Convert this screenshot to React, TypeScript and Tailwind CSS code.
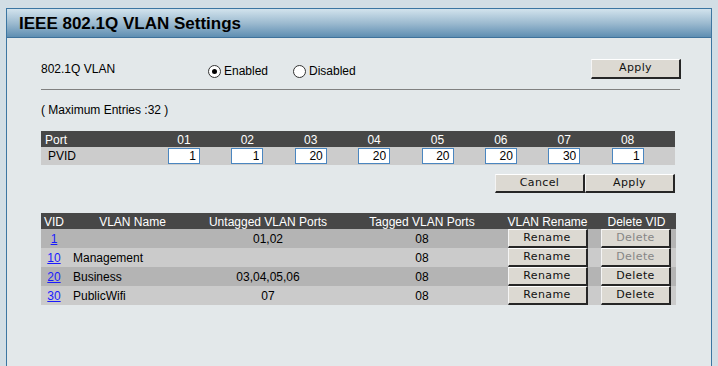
import { useState } from "react"

const ports = ["01", "02", "03", "04", "05", "06", "07", "08"]
const pvids = ["1", "1", "20", "20", "20", "20", "30", "1"]

const vlans = [
    { vid: "1", name: "", untagged: "01,02", tagged: "08", canDelete: false },
    { vid: "10", name: "Management", untagged: "", tagged: "08", canDelete: false },
    { vid: "20", name: "Business", untagged: "03,04,05,06", tagged: "08", canDelete: true },
    { vid: "30", name: "PublicWifi", untagged: "07", tagged: "08", canDelete: true },
]

function Btn({ label, className = "", disabled = false }: { label: string; className?: string; disabled?: boolean }) {
    return (
        <button
            className={`flex items-center justify-center bg-[#dcd9d2] border-t border-l border-t-white border-l-[#f4f4f4] border-b-2 border-r-2 border-b-[#262626] border-r-[#262626] font-['DejaVu_Sans',sans-serif] text-[11px] tracking-[0.4px] ${disabled ? "text-[#868686]" : "text-[#111]"} ${className}`}
        >
            {label}
        </button>
    )
}

function Radio({ checked, label, onClick }: { checked: boolean; label: string; onClick: () => void }) {
    return (
        <label className="flex items-center gap-[3px] cursor-pointer" onClick={onClick}>
            <span className="w-[13px] h-[13px] rounded-full border border-[#333] bg-white flex items-center justify-center">
                {checked && <span className="w-[5px] h-[5px] rounded-full bg-black" />}
            </span>
            <span className="text-[12px]">{label}</span>
        </label>
    )
}

export default function App() {
    const [enabled, setEnabled] = useState(true)

    return (
        <div className="w-full h-[366px] overflow-hidden bg-[#d2dee5] pt-2 px-[6px] font-['Liberation_Sans',Arial,sans-serif] text-black">
            <div className="border border-[#3c76a2] bg-[#e3e8ea] h-[400px]">
                {/* Title bar */}
                <div className="h-[29px] flex items-center pl-3 bg-gradient-to-b from-[#d2e3ed] via-[#9dbbd0] to-[#5e8eb2] border-b border-[#3f729b]">
                    <h1 className="text-[17px] font-bold leading-none">IEEE 802.1Q VLAN Settings</h1>
                </div>

                <div className="pl-[34px] pt-[21px]">
                    {/* enable row */}
                    <div className="flex items-center h-[20px] w-[640px]">
                        <span className="w-[167px] text-[12px]">802.1Q VLAN</span>
                        <div className="flex pt-[4px]">
                            <div className="w-[85px]">
                                <Radio checked={enabled} label="Enabled" onClick={() => setEnabled(true)} />
                            </div>
                            <Radio checked={!enabled} label="Disabled" onClick={() => setEnabled(false)} />
                        </div>
                        <Btn label="Apply" className="ml-auto w-[90px] h-[20px]" />
                    </div>

                    <div className="mt-[10px] w-[639px] border-t border-[#808080]" />

                    <p className="mt-[13px] text-[12px] leading-[14px]">( Maximum Entries :32 )</p>

                    {/* PVID table */}
                    <div className="mt-[14px] w-[634px] text-[12px]">
                        <div className="grid grid-cols-[127px_repeat(8,1fr)] h-[16px] items-center bg-[#474747] text-white">
                            <span className="pl-1">Port</span>
                            {ports.map(p => (
                                <span key={p} className="w-[32px] text-center">{p}</span>
                            ))}
                        </div>
                        <div className="grid grid-cols-[127px_repeat(8,1fr)] h-[18px] items-center bg-[#cccccc]">
                            <span className="pl-[7px]">PVID</span>
                            {pvids.map((v, i) => (
                                <input
                                    key={i}
                                    defaultValue={v}
                                    className="w-[32px] h-[16px] border border-[#4a86c0] bg-white text-right pr-[3px] text-[12px] outline-none"
                                />
                            ))}
                        </div>
                    </div>

                    <div className="mt-[9px] w-[634px] flex justify-end">
                        <Btn label="Cancel" className="w-[90px] h-[19px]" />
                        <Btn label="Apply" className="w-[90px] h-[19px]" />
                    </div>

                    {/* VLAN table */}
                    <div className="mt-[20px] w-[635px] text-[12px]">
                        <div className="grid grid-cols-[26px_131px_140px_168px_83px_87px] h-[16px] items-center bg-[#474747] text-white text-center">
                            <span>VID</span>
                            <span>VLAN Name</span>
                            <span>Untagged VLAN Ports</span>
                            <span>Tagged VLAN Ports</span>
                            <span>VLAN Rename</span>
                            <span className="pl-2">Delete VID</span>
                        </div>
                        {vlans.map((v, i) => (
                            <div
                                key={v.vid}
                                className={`grid grid-cols-[26px_131px_140px_168px_83px_87px] h-[19px] items-center ${i % 2 === 0 ? "bg-[#b4b4b4]" : "bg-[#cbcbcb]"}`}
                            >
                                <a href="#" className="text-center text-[#1a1aff] underline">{v.vid}</a>
                                <span className="pl-[6px]">{v.name}</span>
                                <span className="text-center">{v.untagged}</span>
                                <span className="text-center">{v.tagged}</span>
                                <div className="flex justify-center">
                                    <Btn label="Rename" className="w-[80px] h-[19px]" />
                                </div>
                                <div className="flex justify-end pr-[5px]">
                                    <Btn label="Delete" disabled={!v.canDelete} className="w-[70px] h-[19px]" />
                                </div>
                            </div>
                        ))}
                    </div>
                </div>
            </div>
        </div>
    )
}
